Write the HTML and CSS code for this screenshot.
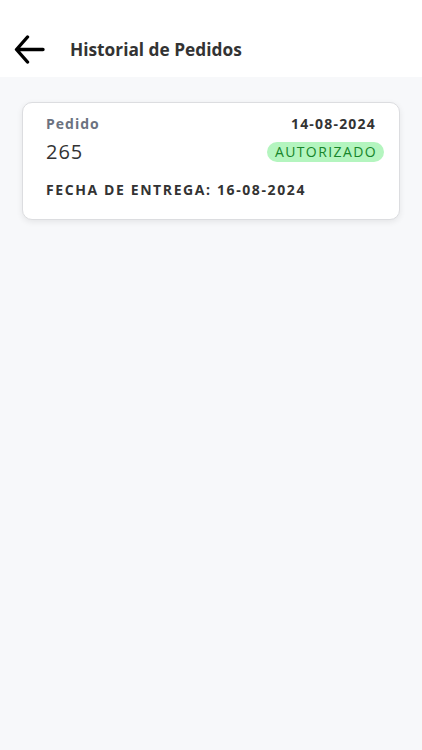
FILE: index.html
```html
<!DOCTYPE html>
<html lang="es">
<head>
<meta charset="utf-8">
<link rel="stylesheet" href="styles.css">
</head>
<body>
<header class="topbar">
  <button class="back" aria-label="Volver">
    <svg width="31" height="29" viewBox="0 0 31 29"><path d="M29 14.5H3M13.5 2L2.5 14.5L13.5 27" fill="none" stroke="#000" stroke-width="3.4" stroke-linecap="round" stroke-linejoin="round"/></svg>
  </button>
  <h1 class="title">Historial de Pedidos</h1>
</header>
<main class="content">
  <div class="card">
    <div class="row">
      <span class="label">Pedido</span>
      <span class="date">14-08-2024</span>
    </div>
    <div class="row mid">
      <span class="num">265</span>
      <span class="badge">AUTORIZADO</span>
    </div>
    <div class="delivery">FECHA DE ENTREGA: 16-08-2024</div>
  </div>
</main>
</body>
</html>
```
FILE: styles.css
```css
html, body { margin: 0; padding: 0; }
body {
  font-family: "Open Sans", sans-serif;
  background: #f7f8fa;
  width: 422px;
  height: 750px;
}
.topbar {
  background: #fff;
  height: 77px;
  display: flex;
  align-items: center;
  padding: 22px 0 0 14px;
  box-sizing: border-box;
}
.back {
  border: 0;
  background: none;
  padding: 0;
  width: 32px;
  height: 29px;
  display: flex;
  align-items: center;
}
.title {
  margin: 0 0 0 24px;
  font-size: 17.3px;
  font-weight: 700;
  color: #333;
}
.content { padding: 25px 22px 0 22px; }
.card {
  background: #fff;
  border: 1px solid #dcdde0;
  border-radius: 10px;
  box-shadow: 0 2px 6px rgba(0,0,0,0.08);
  padding: 11px 15px 20px 23px;
}
.row { display: flex; justify-content: space-between; align-items: center; }
.label {
  font-size: 14px; font-weight: 700; color: #6b7280; letter-spacing: 1px;
}
.date {
  font-size: 14px; font-weight: 700; color: #333; letter-spacing: 1.2px; margin-right: 8px;
}
.mid { margin-top: 5px; }
.num { font-size: 20px; color: #333; letter-spacing: 1px; }
.badge {
  background: #b4f5bf;
  color: #17862a;
  font-size: 14px;
  letter-spacing: 1.4px;
  border-radius: 10px;
  padding: 0 7px 0 8px;
  line-height: 20px;
}
.delivery {
  margin-top: 15px;
  font-size: 14px; font-weight: 700; color: #333; letter-spacing: 1.6px;
}
```
